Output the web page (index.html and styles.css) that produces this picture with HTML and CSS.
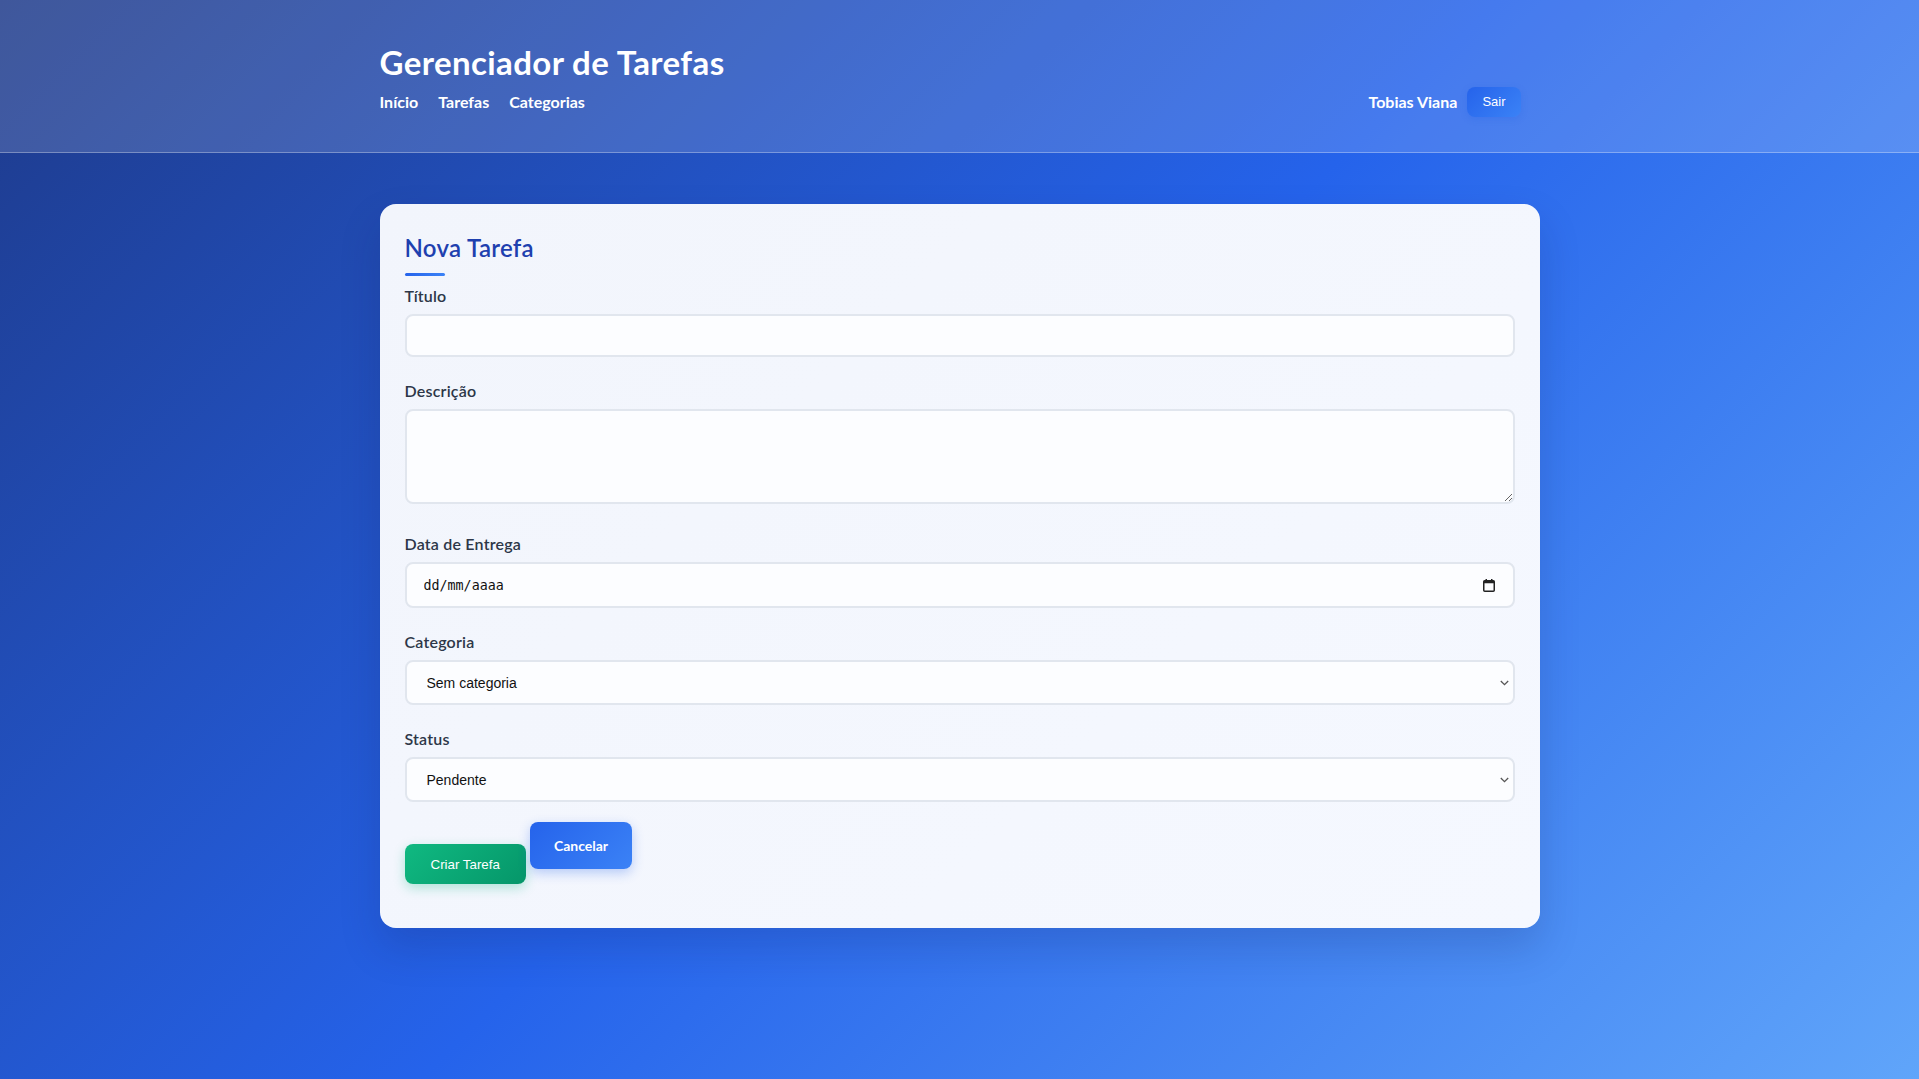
FILE: index.html
```html
<!DOCTYPE html>
<html lang="pt-BR">
<head>
<meta charset="utf-8">
<title>Nova Tarefa - Gerenciador de Tarefas</title>
<link rel="stylesheet" href="styles.css">
</head>
<body>
<header class="site-header">
  <div class="container">
    <h1 class="brand">Gerenciador de Tarefas</h1>
    <div class="nav-row">
      <nav class="nav">
        <a href="#" class="nav-link">Início</a>
        <a href="#" class="nav-link">Tarefas</a>
        <a href="#" class="nav-link">Categorias</a>
      </nav>
      <div class="user">
        <span class="user-name">Tobias Viana</span>
        <button class="btn-logout" type="button">Sair</button>
      </div>
    </div>
  </div>
</header>
<main class="container main">
  <section class="card">
    <h2 class="card-title">Nova Tarefa</h2>
    <div class="title-bar"></div>
    <form class="form">
      <div class="form-group">
        <label class="label" for="titulo">Título</label>
        <input class="field field-text" id="titulo" type="text">
      </div>
      <div class="form-group form-group-area">
        <label class="label" for="descricao">Descrição</label>
        <textarea class="field field-area" id="descricao"></textarea>
      </div>
      <div class="form-group">
        <label class="label" for="data">Data de Entrega</label>
        <div class="field-wrap">
          <input class="field field-date" id="data" type="text" placeholder="dd/mm/aaaa">
          <svg class="icon-calendar" width="12" height="13" viewBox="0 0 12 13" aria-hidden="true">
            <rect x="0.75" y="1.75" width="10.5" height="10.5" rx="1" fill="none" stroke="#222" stroke-width="1.5"/>
            <rect x="0.75" y="1.75" width="10.5" height="2.5" fill="#222"/>
            <rect x="2.5" y="0" width="1.5" height="2" fill="#222"/>
            <rect x="8" y="0" width="1.5" height="2" fill="#222"/>
          </svg>
        </div>
      </div>
      <div class="form-group">
        <label class="label" for="categoria">Categoria</label>
        <div class="field-wrap">
          <select class="field field-select" id="categoria">
            <option>Sem categoria</option>
          </select>
          <svg class="icon-chevron" width="9" height="6" viewBox="0 0 9 6" aria-hidden="true">
            <path d="M0.8 1 L4.5 4.6 L8.2 1" fill="none" stroke="#555" stroke-width="1.3"/>
          </svg>
        </div>
      </div>
      <div class="form-group form-group-last">
        <label class="label" for="status">Status</label>
        <div class="field-wrap">
          <select class="field field-select" id="status">
            <option>Pendente</option>
            <option>Em andamento</option>
            <option>Concluída</option>
          </select>
          <svg class="icon-chevron" width="9" height="6" viewBox="0 0 9 6" aria-hidden="true">
            <path d="M0.8 1 L4.5 4.6 L8.2 1" fill="none" stroke="#555" stroke-width="1.3"/>
          </svg>
        </div>
      </div>
      <div class="actions">
        <button class="btn-create" type="button">Criar Tarefa</button>
        <a href="#" class="btn-cancel">Cancelar</a>
      </div>
    </form>
  </section>
</main>
</body>
</html>
```

FILE: styles.css
```css
* {
  box-sizing: border-box;
}

html, body {
  margin: 0;
  padding: 0;
}

body {
  min-height: 1079px;
  font-family: Lato, "Noto Sans", sans-serif;
  line-height: 1.6;
  color: #2d3748;
  background: linear-gradient(135deg, #1e3a8a 0%, #2563eb 50%, #60a5fa 100%);
}

.container {
  width: 1160px;
  margin: 0 auto;
}

.site-header {
  background: rgba(255, 255, 255, 0.15);
  border-bottom: 1px solid rgba(255, 255, 255, 0.3);
  padding: 43px 0 35px;
}

.brand {
  margin: 0 0 4px;
  font-size: 33px;
  line-height: 1.2;
  font-weight: 700;
  letter-spacing: 0.4px;
  color: #ffffff;
}

.nav-row {
  display: flex;
  justify-content: space-between;
  align-items: center;
  height: 30px;
}

.nav {
  display: flex;
  gap: 20px;
}

.nav-link {
  color: #ffffff;
  text-decoration: none;
  font-weight: 700;
  font-size: 16px;
}

.user {
  display: flex;
  align-items: center;
  gap: 10px;
  margin-right: 19px;
}

.user-name {
  color: #ffffff;
  font-weight: 700;
  font-size: 16px;
}

.btn-logout {
  height: 30px;
  padding: 0 15px;
  border: none;
  border-radius: 8px;
  background: linear-gradient(135deg, #2563eb, #3b82f6);
  color: #ffffff;
  font-family: "Liberation Sans", Arial, sans-serif;
  font-size: 13px;
  box-shadow: 0 2px 6px rgba(37, 99, 235, 0.25);
}

.main {
  margin-top: 51px;
}

.card {
  background: linear-gradient(135deg, #f2f5fc 0%, #f5f8ff 100%);
  border-radius: 16px;
  padding: 25px;
  box-shadow: 0 20px 40px rgba(15, 30, 90, 0.18);
}

.card-title {
  margin: 5px 0 0;
  font-size: 24px;
  line-height: 1.2;
  font-weight: 600;
  letter-spacing: 0.3px;
  color: #1e40af;
}

.title-bar {
  width: 40px;
  height: 3px;
  margin-top: 11px;
  margin-bottom: 8px;
  border-radius: 2px;
  background: linear-gradient(90deg, #2563eb, #3b82f6);
}

.form-group {
  margin-bottom: 22px;
}

.form-group-area {
  margin-bottom: 28px;
}

.form-group-last {
  margin-bottom: 20px;
}

.label {
  display: block;
  margin-bottom: 6px;
  font-size: 16px;
  line-height: 24px;
  font-weight: 600;
  letter-spacing: 0.2px;
  color: #2d3748;
}

.field-wrap {
  position: relative;
}

.field {
  display: block;
  width: 100%;
  border: 2px solid #e1e6ee;
  border-radius: 8px;
  background: #fcfdff;
  padding: 12px 16px;
  font-family: "Liberation Sans", Arial, sans-serif;
  font-size: 14px;
  color: #111111;
  outline: none;
}

.field-text {
  height: 43px;
}

.field-area {
  height: 95px;
  resize: vertical;
}

.field-date {
  height: 46px;
  padding-left: 17px;
  font-family: "DejaVu Sans Mono", monospace;
  font-size: 13.33px;
}

.field-date::placeholder {
  color: #111111;
  opacity: 1;
}

.icon-calendar {
  position: absolute;
  right: 20px;
  top: 17px;
}

.field-select {
  height: 45px;
  padding: 0 30px 0 20px;
  appearance: none;
  -webkit-appearance: none;
}

.icon-chevron {
  position: absolute;
  right: 6px;
  top: 20px;
  pointer-events: none;
}

.actions {
  display: flex;
  align-items: flex-start;
  gap: 4px;
  margin-bottom: 19px;
}

.btn-create {
  margin-top: 22px;
  height: 40px;
  padding: 0 26px;
  border: none;
  border-radius: 8px;
  background: linear-gradient(135deg, #10b981, #059669);
  color: #ffffff;
  font-family: "Liberation Sans", Arial, sans-serif;
  font-size: 13.33px;
  box-shadow: 0 4px 12px rgba(16, 185, 129, 0.3);
}

.btn-cancel {
  display: inline-block;
  height: 47px;
  padding: 12px 24px;
  border-radius: 8px;
  background: linear-gradient(135deg, #2563eb, #3b82f6);
  color: #ffffff;
  font-weight: 700;
  font-size: 14px;
  line-height: 23px;
  text-decoration: none;
  box-shadow: 0 4px 12px rgba(37, 99, 235, 0.3);
}
```
